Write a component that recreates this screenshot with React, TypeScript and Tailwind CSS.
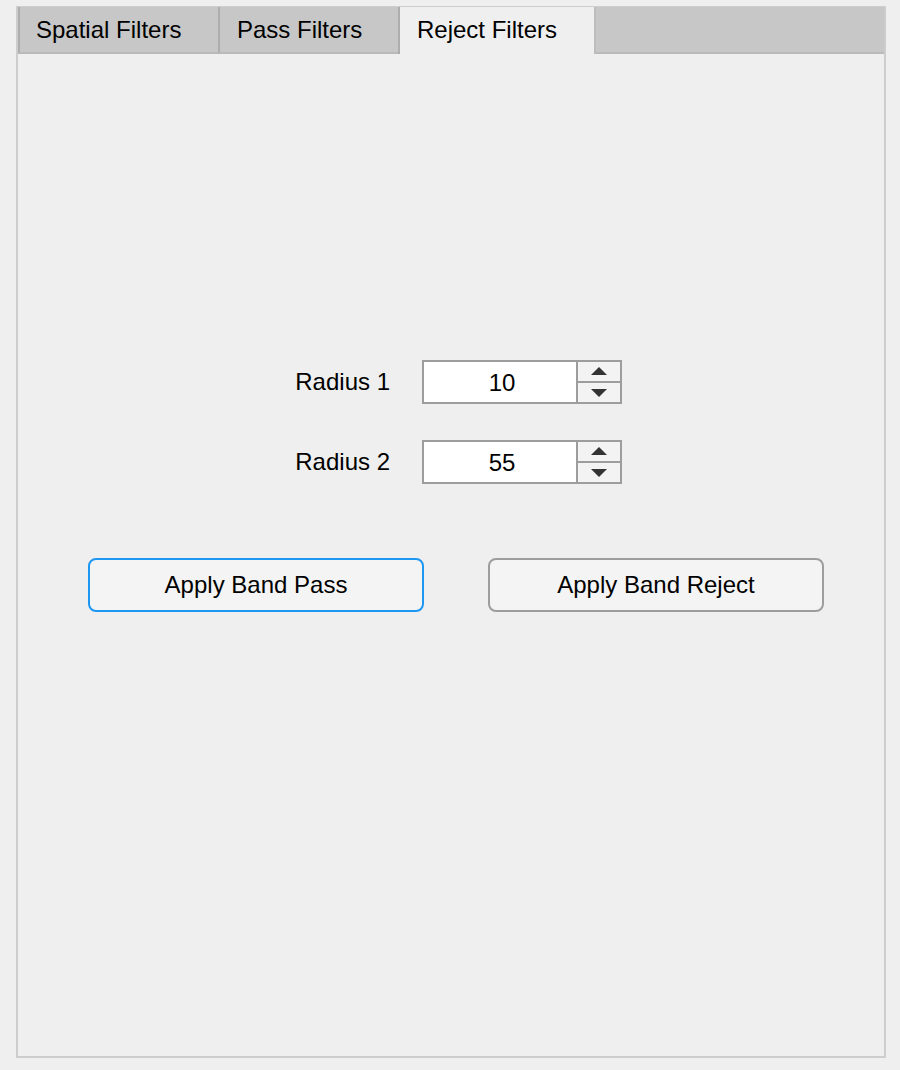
import React from "react";

function Spinner({ value }: { value: string }) {
  return (
    <div className="flex h-[44px] w-[200px] border-2 border-[#9d9d9d] bg-white">
      <div className="flex flex-1 items-center justify-center bg-white pl-[4px] pt-[1px] text-[24px] text-black">
        {value}
      </div>
      <div className="flex w-[44px] flex-col border-l-2 border-[#9d9d9d] bg-[#f3f3f3]">
        <div className="flex flex-1 items-center justify-center border-b-2 border-[#9d9d9d]">
          <svg width="16" height="9" viewBox="0 0 16 9">
            <polygon points="0,8 8,0 16,8" fill="#333" />
          </svg>
        </div>
        <div className="flex flex-1 items-center justify-center">
          <svg width="16" height="9" viewBox="0 0 16 9">
            <polygon points="0,1 16,1 8,9" fill="#333" />
          </svg>
        </div>
      </div>
    </div>
  );
}

export default function App() {
  return (
    <div
      className="h-[1070px] w-[900px] bg-[#efefef] pl-[16px] pt-[6px]"
      style={{ fontFamily: '"Liberation Sans", Arial, sans-serif' }}
    >
      <div className="flex h-[1052px] w-[870px] flex-col border-x-2 border-b-2 border-t border-[#cdcdcd] bg-[#efefef]">
        {/* Tab strip */}
        <div className="flex h-[47px] shrink-0 items-stretch">
          <div className="flex w-[200px] items-center border-b-2 border-l-2 border-[#adadad] border-b-[#bababa] bg-[#c7c7c7] pl-[16px] text-[24px] text-black">
            Spatial Filters
          </div>
          <div className="flex w-[180px] items-center border-b-2 border-l-2 border-[#adadad] border-b-[#bababa] bg-[#c7c7c7] pl-[17px] text-[24px] text-black">
            Pass Filters
          </div>
          <div className="flex w-[198px] items-center border-l-2 border-r-2 border-l-[#adadad] border-r-[#bdbdbd] bg-[#efefef] pb-[2px] pl-[17px] text-[24px] text-black">
            Reject Filters
          </div>
          <div className="flex-1 border-b-2 border-[#bababa] bg-[#c7c7c7]" />
        </div>

        {/* Content */}
        <div className="flex flex-1 flex-col pt-[306px]">
          <div className="flex h-[44px] items-center">
            <div className="w-[372px] text-right text-[24px] text-black">Radius 1</div>
            <div className="ml-[32px]">
              <Spinner value="10" />
            </div>
          </div>
          <div className="mt-[36px] flex h-[44px] items-center">
            <div className="w-[372px] text-right text-[24px] text-black">Radius 2</div>
            <div className="ml-[32px]">
              <Spinner value="55" />
            </div>
          </div>
          <div className="mt-[74px] flex gap-[64px] pl-[70px]">
            <button className="flex h-[54px] w-[336px] items-center justify-center rounded-[8px] border-2 border-[#1d97f1] bg-[#f4f4f4] text-[24px] text-black">
              Apply Band Pass
            </button>
            <button className="flex h-[54px] w-[336px] items-center justify-center rounded-[8px] border-2 border-[#9d9d9d] bg-[#f4f4f4] text-[24px] text-black">
              Apply Band Reject
            </button>
          </div>
        </div>
      </div>
    </div>
  );
}
